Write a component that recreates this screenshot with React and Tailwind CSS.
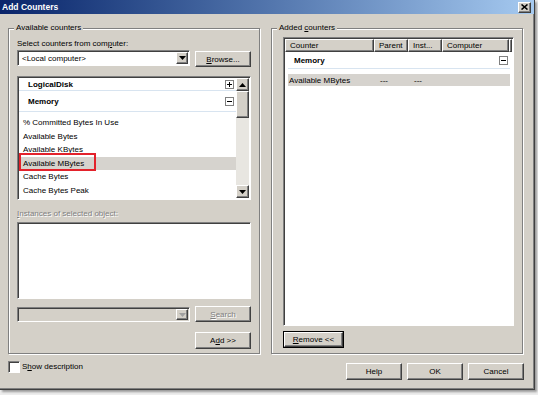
import React from 'react';

// classic 3D edges
const raised =
  'border border-t-white border-l-white border-r-[#404040] border-b-[#404040] shadow-[inset_-1px_-1px_0_#808080]';
const sunken =
  'border border-t-[#808080] border-l-[#808080] border-r-white border-b-white shadow-[inset_1px_1px_0_#404040]';
const grayed = 'text-[#808080] [text-shadow:1px_1px_0_#ffffff]';

function Btn({ children, className = '', disabled = false }) {
  return (
    <div
      className={`flex items-center justify-center bg-[#d4d0c8] ${raised} ${
        disabled ? grayed : 'text-black'
      } ${className}`}
    >
      {children}
    </div>
  );
}

function U({ children }) {
  return <span className="underline underline-offset-1">{children}</span>;
}

function Tri({ up = false, color = '#000' }) {
  return (
    <svg width="7" height="4" viewBox="0 0 7 4">
      <polygon points={up ? '0,4 7,4 3.5,0' : '0,0 7,0 3.5,4'} fill={color} />
    </svg>
  );
}

function ToggleBox({ plus = false, className = '' }) {
  return (
    <div
      className={`relative w-[9px] h-[9px] border border-[#808080] bg-white flex items-center justify-center ${className}`}
    >
      <div className="w-[5px] h-px bg-black" />
      {plus && <div className="absolute w-px h-[5px] bg-black" />}
    </div>
  );
}

function Combo({ text = '', disabled = false, className = '' }) {
  return (
    <div className={`flex p-px ${sunken} ${disabled ? 'bg-[#d4d0c8]' : 'bg-white'} ${className}`}>
      <div className="flex-1 flex items-center pl-[3px]">{text}</div>
      <Btn className="w-[12px]">
        <Tri color={disabled ? '#a0a0a0' : '#000'} />
      </Btn>
    </div>
  );
}

function GroupBox({ label, className = '', children }) {
  return (
    <div
      className={`relative border border-[#808080] shadow-[inset_1px_1px_0_#ffffff,1px_1px_0_#ffffff] ${className}`}
    >
      <span className="absolute -top-[7px] left-[5px] px-[2px] bg-[#d4d0c8] leading-[11px]">
        {label}
      </span>
      {children}
    </div>
  );
}

const items = [
  '% Committed Bytes In Use',
  'Available Bytes',
  'Available KBytes',
  'Available MBytes',
  'Cache Bytes',
  'Cache Bytes Peak',
];

export default function App() {
  return (
    <div className="w-[538px] h-[395px] bg-[#ededed] font-['Liberation_Sans',Arial,sans-serif] text-[8px] leading-[11px] text-black">
      <div className="w-[535px] h-[390px] flex flex-col bg-[#d4d0c8] border-r border-b border-r-[#404040] border-b-[#404040] shadow-[inset_-1px_-1px_0_#808080,2px_2px_2px_rgba(0,0,0,0.35)]">
        {/* Title bar */}
        <div className="h-[14px] flex items-center pl-[2px] pr-[3px] bg-linear-to-r from-[#0a246a] to-[#a6caf0]">
          <span className="text-white font-bold text-[8.5px]">Add Counters</span>
          <Btn className="ml-auto w-[13px] h-[11px]">
            <svg width="7" height="6" viewBox="0 0 7 6">
              <path d="M0.5 0.5 L6.5 5.5 M6.5 0.5 L0.5 5.5" stroke="#000" strokeWidth="1.6" />
            </svg>
          </Btn>
        </div>

        {/* Body */}
        <div className="flex-1 px-[8px] pt-[14px]">
          <div className="flex gap-[11px]">
            {/* Available counters */}
            <GroupBox
              label="Available counters"
              className="w-[252px] h-[326px] flex flex-col pl-[8px] pr-[8px] pt-[9px]"
            >
              <div className="h-[11px]">
                Select counters from com<U>p</U>uter:
              </div>
              <div className="mt-[1px] flex justify-between">
                <Combo text="<Local computer>" className="w-[173px] h-[16px]" />
                <Btn className="w-[56px] h-[16px] mt-[1px]">
                  <U>B</U>rowse...
                </Btn>
              </div>

              <div className={`mt-[9px] w-[234px] h-[124px] flex bg-white p-px ${sunken}`}>
                <div className="w-[217px] flex flex-col">
                  <div className="h-[12px] flex items-center pl-[9px] font-bold">
                    LogicalDisk
                    <ToggleBox plus className="ml-auto mr-[2px]" />
                  </div>
                  <div className="h-px bg-[#d8e4f0]" />
                  <div className="h-[20px] flex items-center pl-[9px] font-bold">
                    Memory
                    <ToggleBox className="ml-auto mr-[2px]" />
                  </div>
                  <div className="h-px bg-[#d8e4f0]" />
                  <div className="h-[4px]" />
                  {items.map((t) => (
                    <div
                      key={t}
                      className={`relative h-[13.5px] flex items-center pl-[4px] ${
                        t === 'Available MBytes' ? 'bg-[#d6d3ce]' : ''
                      }`}
                    >
                      {t}
                      {t === 'Available MBytes' && (
                        <div className="absolute left-0 -top-[4px] w-[77px] h-[18px] border-2 border-[#e3222b]" />
                      )}
                    </div>
                  ))}
                </div>
                {/* scrollbar */}
                <div className="w-[13px] flex flex-col">
                  <Btn className="h-[13px]">
                    <Tri up />
                  </Btn>
                  <div className={`h-[27px] bg-[#d4d0c8] ${raised}`} />
                  <div className="flex-1 bg-[#e8e6e1]" />
                  <Btn className="h-[13px]">
                    <Tri />
                  </Btn>
                </div>
              </div>

              <div className={`mt-[8px] h-[11px] ${grayed}`}>
                <U>I</U>nstances of selected object:
              </div>
              <div className={`mt-[3px] h-[77px] bg-white ${sunken}`} />

              <div className="mt-[7px] flex justify-between">
                <Combo disabled className="w-[173px] h-[15px] mt-[1px]" />
                <Btn disabled className="w-[56px] h-[16px]">
                  <U>S</U>earch
                </Btn>
              </div>
              <Btn className="mt-[10px] self-end w-[56px] h-[17px]">
                A<U>d</U>d &gt;&gt;
              </Btn>
            </GroupBox>

            {/* Added counters */}
            <GroupBox
              label={
                <>
                  Added <U>c</U>ounters
                </>
              }
              className="w-[252px] h-[326px] flex flex-col pl-[11px] pr-[8px] pt-[8px]"
            >
              <div className={`w-[231px] h-[289px] flex flex-col bg-white p-px ${sunken}`}>
                <div className="h-[13px] flex">
                  <div className={`w-[89px] flex items-center pl-[4px] bg-[#d4d0c8] ${raised}`}>Counter</div>
                  <div className={`w-[34px] flex items-center pl-[4px] bg-[#d4d0c8] ${raised}`}>Parent</div>
                  <div className={`w-[34px] flex items-center pl-[4px] bg-[#d4d0c8] ${raised}`}>Inst...</div>
                  <div className={`w-[67px] flex items-center pl-[4px] bg-[#d4d0c8] ${raised}`}>Computer</div>
                  <div className={`flex-1 bg-[#d4d0c8] ${raised}`} />
                </div>
                <div className="h-[16px] flex items-center pl-[9px] font-bold">
                  Memory
                  <ToggleBox className="ml-auto mr-[4px]" />
                </div>
                <div className="h-px ml-[3px] mr-[2px] bg-[#d8e4f0]" />
                <div className="mt-[5px] h-[12px] ml-[3px] mr-[2px] flex items-center pl-[1px] bg-[#d6d3ce]">
                  <span className="w-[91px]">Available MBytes</span>
                  <span className="w-[34px]">---</span>
                  <span>---</span>
                </div>
              </div>
              <div className="mt-[5px] w-[61px] h-[17px] border border-black">
                <Btn className="w-full h-full">
                  <U>R</U>emove &lt;&lt;
                </Btn>
              </div>
            </GroupBox>
          </div>

          {/* Bottom row */}
          <div className="mt-[7px] flex items-start">
            <div className={`w-[12px] h-[12px] bg-white ${sunken}`} />
            <span className="ml-[2px] leading-[12px]">
              S<U>h</U>ow description
            </span>
            <div className="ml-auto mr-[2px] mt-[2px] flex gap-[5px]">
              <Btn className="w-[56px] h-[17px]">Help</Btn>
              <Btn className="w-[56px] h-[17px]">OK</Btn>
              <Btn className="w-[56px] h-[17px]">Cancel</Btn>
            </div>
          </div>
        </div>
      </div>
    </div>
  );
}
